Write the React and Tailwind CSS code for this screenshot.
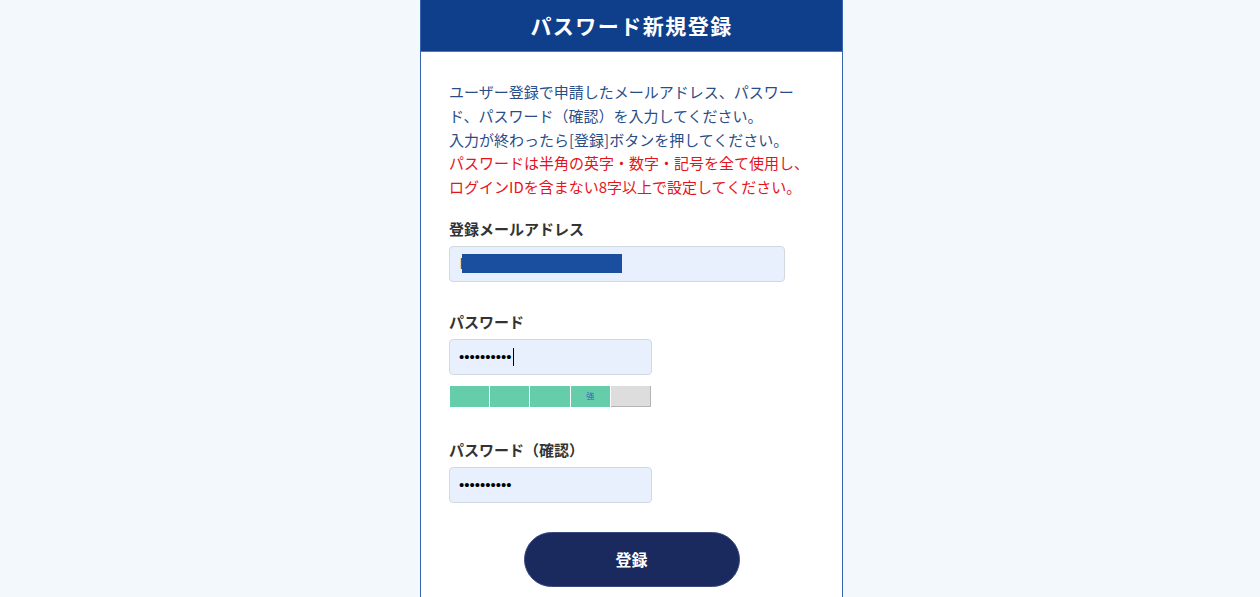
export default function App() {
  return (
    <div
      className="min-h-screen bg-[#f3f8fc] flex justify-center pl-[3px]"
      style={{ fontFamily: '"Noto Sans CJK JP", "Noto Sans", sans-serif' }}
    >
      <div className="w-[423px] bg-white border border-[#3a64b2] border-t-0 pb-10">
        {/* Header */}
        <div className="h-[52px] bg-[#0f3f8b] border-b border-[#4d76bd] flex items-center justify-center">
          <h1 className="text-white text-[21px] font-bold tracking-[0.07em] leading-none">
            パスワード新規登録
          </h1>
        </div>

        <div className="px-[28px] pt-[28px]">
          <p className="text-[15px] leading-[23.75px] text-[#2b4d87]">
            ユーザー登録で申請したメールアドレス、パスワー<br />
            ド、パスワード（確認）を入力してください。<br />
            入力が終わったら[登録]ボタンを押してください。<br />
            <span className="text-[#e5141c]">
              パスワードは半角の英字・数字・記号を全て使用し、<br />
              ログインIDを含まない8字以上で設定してください。
            </span>
          </p>

          {/* Email */}
          <div className="mt-[18px]">
            <label className="block text-[15px] leading-[24px] font-bold text-[#333]">
              登録メールアドレス
            </label>
            <div className="mt-[5px] w-[336px] h-[36px] bg-[#e8f0fe] border border-[#d3d9e1] rounded-[4px] flex items-center pl-[10px]">
              <span className="text-[14px] text-[#5a3a1a] leading-none" style={{ fontFamily: '"Liberation Sans", sans-serif' }}>k</span>
              <div className="w-[160px] h-[19px] bg-[#1a4f9f] -ml-[5px]" />
            </div>
          </div>

          {/* Password */}
          <div className="mt-[28px]">
            <label className="block text-[15px] leading-[24px] font-bold text-[#333]">
              パスワード
            </label>
            <div className="mt-[5px] w-[203px] h-[36px] bg-[#e8f0fe] border border-[#d3d9e1] rounded-[4px] flex items-center pl-[9px]">
              <span className="text-[15px] text-black leading-none" style={{ fontFamily: '"Liberation Sans", sans-serif' }}>
                ••••••••••
              </span>
              <span className="w-px h-[18px] bg-black ml-[1px]" />
            </div>
            <div className="mt-[11px] ml-px flex gap-px w-[201px] h-[21px]">
              <div className="flex-1 bg-[#66cdaa]" />
              <div className="flex-1 bg-[#66cdaa]" />
              <div className="flex-1 bg-[#66cdaa]" />
              <div className="flex-1 bg-[#66cdaa] flex items-center justify-center">
                <span className="text-[8px] leading-none text-[#3b64b4]">強</span>
              </div>
              <div className="flex-1 bg-[#dddddd] border-r border-b border-[#b3b3b3]" />
            </div>
          </div>

          {/* Password confirm */}
          <div className="mt-[31px]">
            <label className="block text-[15px] leading-[24px] font-bold text-[#333]">
              パスワード（確認）
            </label>
            <div className="mt-[5px] w-[203px] h-[36px] bg-[#e8f0fe] border border-[#d3d9e1] rounded-[4px] flex items-center pl-[9px]">
              <span className="text-[15px] text-black leading-none" style={{ fontFamily: '"Liberation Sans", sans-serif' }}>
                ••••••••••
              </span>
            </div>
          </div>

          <div className="mt-[29px] flex justify-center">
            <button className="w-[216px] h-[55px] rounded-full bg-[#1b2a5e] border border-[#3a4a80] text-white text-[16px] font-bold">
              登録
            </button>
          </div>
        </div>
      </div>
    </div>
  );
}
